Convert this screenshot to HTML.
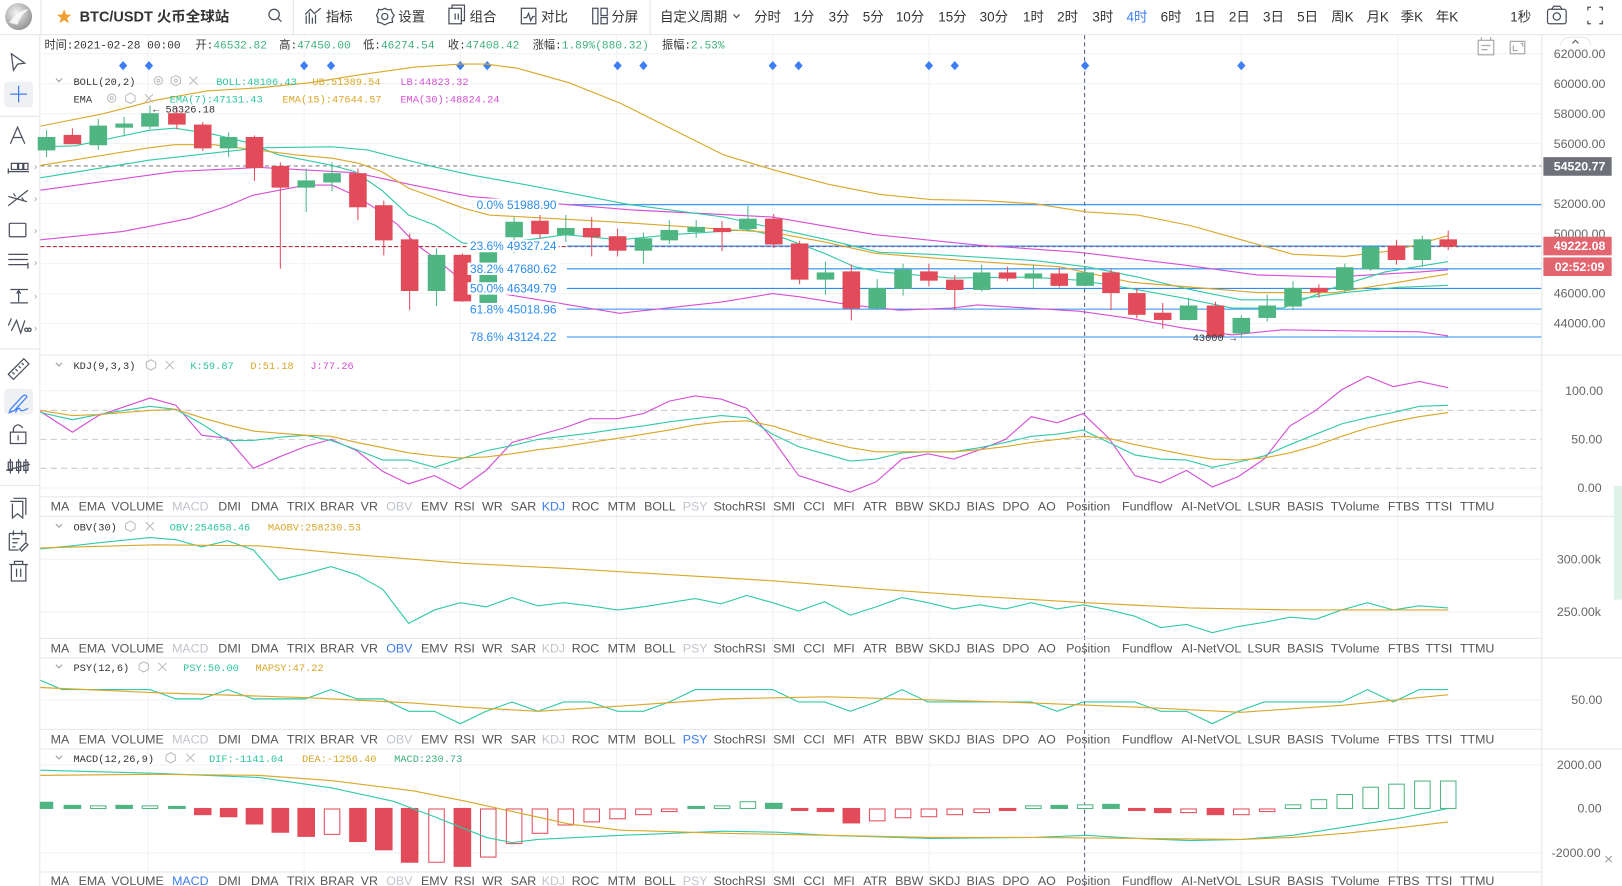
<!DOCTYPE html>
<html><head><meta charset="utf-8">
<style>
html,body{margin:0;padding:0;background:#fff;overflow:hidden;}
svg{display:block;}
text{font-family:"Liberation Sans","Noto Sans CJK SC",sans-serif;}
.m,.m text,text.m{font-family:"Liberation Mono","Noto Sans CJK SC",monospace;font-size:10px;}
.inf text{font-family:"Liberation Mono","Noto Sans CJK SC",monospace;font-size:10.8px;}
.tb{font-size:13px;fill:#333;}
.tab{font-size:12px;fill:#555;text-anchor:middle;}
.ax{font-size:12px;fill:#666;}
.ic{fill:none;stroke:#4a4f5c;stroke-width:1.2;}
</style></head>
<body>
<svg width="1622" height="886" viewBox="0 0 1568 857" preserveAspectRatio="none" xmlns="http://www.w3.org/2000/svg">
<rect width="1568" height="857" fill="#fff"/>
<!-- top bar -->
<line x1="0" y1="33.5" x2="1568" y2="33.5" stroke="#e3e5ea"/>
<line x1="39.5" y1="0" x2="39.5" y2="33" stroke="#e3e5ea"/>
<line x1="283.5" y1="0" x2="283.5" y2="33" stroke="#e3e5ea"/>
<line x1="628.5" y1="0" x2="628.5" y2="33" stroke="#e3e5ea"/>
<defs><radialGradient id="lg" cx="0.4" cy="0.35" r="0.7"><stop offset="0" stop-color="#f2f2f2"/><stop offset="1" stop-color="#8f8f8f"/></radialGradient></defs>
<circle cx="18" cy="16" r="13" fill="url(#lg)"/>
<path d="M9 22 Q16 10 28 9 Q20 14 17 24 Z" fill="#fff" opacity="0.8"/>
<path d="M62 9 L64 14 L69 14.3 L65 17.5 L66.5 22.5 L62 19.6 L57.5 22.5 L59 17.5 L55 14.3 L60 14 Z" fill="#f0a030"/>
<text x="77" y="21" style="font-size:14px;font-weight:bold;fill:#333">BTC/USDT 火币全球站</text>
<circle cx="265" cy="14" r="5" class="ic"/><line x1="269" y1="18" x2="272" y2="21" class="ic"/>
<path d="M296 23 L296 15 M299 23 L299 12 M302 23 L302 17 M305 23 L305 14 M295 14 L300 9 L304 13 L310 8" class="ic"/>
<text x="315" y="21" class="tb">指标</text>
<circle cx="372" cy="16" r="3" class="ic"/><path d="M372 8 L375 9.5 L378 9 L379 12 L381 15 L379 18 L379.5 21.5 L376 22 L372 24 L368 22 L365 21.5 L365.5 18 L364 15 L365.5 12 L366 9 L369 9.5 Z" class="ic"/>
<text x="385" y="21" class="tb">设置</text>
<rect x="434" y="8" width="12" height="15" class="ic"/><path d="M437 8 V5 H449 V20 H446 M440 13 V19 M443 13 V19" class="ic"/>
<text x="454" y="21" class="tb">组合</text>
<rect x="504" y="8" width="14" height="15" class="ic"/><path d="M506 17 L509 17 L511 13 L513 20 L515 16 L517 16" class="ic"/>
<text x="523" y="21" class="tb">对比</text>
<rect x="573" y="8" width="5" height="15" class="ic"/><rect x="581" y="8" width="6" height="7" class="ic"/><rect x="581" y="17" width="6" height="6" class="ic"/>
<text x="591" y="21" class="tb">分屏</text>
<text x="638" y="21" class="tb">自定义周期</text>
<path d="M709 14 L712 17 L715 14" class="ic"/>
<g class="tb"><text x="729" y="21">分时</text><text x="767" y="21">1分</text><text x="801" y="21">3分</text><text x="834" y="21">5分</text><text x="866" y="21">10分</text><text x="907" y="21">15分</text><text x="947" y="21">30分</text><text x="989" y="21">1时</text><text x="1022" y="21">2时</text><text x="1056" y="21">3时</text><text x="1089" y="21" style="fill:#3d7ef5">4时</text><text x="1122" y="21">6时</text><text x="1155" y="21">1日</text><text x="1188" y="21">2日</text><text x="1221" y="21">3日</text><text x="1254" y="21">5日</text><text x="1287" y="21">周K</text><text x="1321" y="21">月K</text><text x="1354" y="21">季K</text><text x="1388" y="21">年K</text><text x="1460" y="21">1秒</text></g>
<rect x="1496" y="9" width="18" height="14" rx="2" class="ic"/><circle cx="1505" cy="16" r="3.5" class="ic"/><path d="M1500 9 L1502 6 H1508 L1510 9" class="ic"/>
<path d="M1535 10 V7 H1538 M1546 7 H1549 V10 M1549 20 V23 H1546 M1538 23 H1535 V20" class="ic"/>

<!-- left toolbar -->
<line x1="38.5" y1="34" x2="38.5" y2="857" stroke="#e3e5ea"/>
<line x1="0" y1="112.5" x2="38" y2="112.5" stroke="#e3e5ea"/>
<line x1="0" y1="337.5" x2="38" y2="337.5" stroke="#e3e5ea"/>
<line x1="0" y1="469.5" x2="38" y2="469.5" stroke="#e3e5ea"/>
<rect x="4" y="79" width="28" height="25" rx="4" fill="#eef0f4"/>
<rect x="4" y="376" width="28" height="25" rx="4" fill="#eef0f4"/>
<path d="M11 52 L24 61 L17 62 L13 68 Z" class="ic"/>
<path d="M18 83 V99 M10 91 H26" style="stroke:#3d7ef5;stroke-width:1.2;fill:none"/>
<path d="M10 139 L17 123 L24 139 M13 133 H21" class="ic"/>
<path d="M8 163 V168 M8 166 H28 M11 158 H17 V164 H11 Z M18 158 H22 V164 H18 Z M23 158 H27 V164 H23 Z" class="ic"/>
<path d="M8 199 L27 184 M8 190 L26 195 M13 187 L15 190 M21 191 L23 194" class="ic"/>
<rect x="9" y="216" width="16" height="13" rx="1" class="ic"/>
<path d="M8 246 H27 M8 251 H27 M8 256 H27 M27 254 V260" class="ic"/>
<path d="M10 280 H27 M10 293 H27 M18 281 V292 M16 284 L18 281 L20 284" class="ic"/>
<path d="M8 315 L11 308 M11 320 L16 310 L20 322 L24 310" class="ic"/><circle cx="25.5" cy="319" r="1.6" class="ic"/><circle cx="28.5" cy="319" r="1.6" class="ic"/>
<g style="font-size:9px;fill:#999"><text x="33" y="164">›</text><text x="33" y="195">›</text><text x="33" y="226">›</text><text x="33" y="257">›</text><text x="33" y="289">›</text><text x="33" y="320">›</text></g>
<path d="M8 362 L23 347 L28 352 L13 367 Z M12 360 L14 362 M15 357 L17 359 M18 354 L20 356 M21 351 L23 353" class="ic"/>
<path d="M10 396 L22 383 Q25 381 26 384 L14 397 L9 399 Z M15 399 Q18 392 20 397 Q22 398 27 395" style="stroke:#3d7ef5;stroke-width:1.2;fill:none"/>
<rect x="10" y="418" width="15" height="11" class="ic"/><path d="M13 418 V414 Q17.5 408 22 414" class="ic"/><line x1="17.5" y1="421" x2="17.5" y2="426" class="ic"/>
<path d="M6 455 L29 449 M10 444 V458 M18 444 V458 M25 444 V458" class="ic"/><rect x="8" y="447" width="4" height="8" class="ic"/><rect x="16" y="447" width="4" height="8" class="ic"/><rect x="23" y="447" width="4" height="8" class="ic"/>
<path d="M10 485 H22 V501 L17 497 L12 501 V487 M13 482 H25 V498" class="ic"/>
<path d="M9 516 H25 V524 M9 516 V532 H18 M12 521 H19 M12 525 H17 M12 529 H15 M19 531 L25 525 L27 527 L21 533 Z M13 513 V518 M21 513 V518" class="ic"/>
<path d="M9 546 H27 M14 546 V543 H22 V546 M11 546 V562 H25 V546 M16 550 V558 M20 550 V558" class="ic"/>

<!-- grid -->
<g stroke="#f0f2f5" stroke-width="1">
<line x1="143" y1="34" x2="143" y2="857"/><line x1="294" y1="34" x2="294" y2="857"/><line x1="445" y1="34" x2="445" y2="857"/><line x1="596" y1="34" x2="596" y2="857"/><line x1="747" y1="34" x2="747" y2="857"/><line x1="898" y1="34" x2="898" y2="857"/><line x1="1200" y1="34" x2="1200" y2="857"/><line x1="1351" y1="34" x2="1351" y2="857"/>
<line x1="39" y1="52" x2="1490" y2="52"/><line x1="39" y1="81" x2="1490" y2="81"/><line x1="39" y1="110" x2="1490" y2="110"/><line x1="39" y1="139" x2="1490" y2="139"/><line x1="39" y1="168" x2="1490" y2="168"/><line x1="39" y1="197" x2="1490" y2="197"/><line x1="39" y1="226" x2="1490" y2="226"/><line x1="39" y1="255" x2="1490" y2="255"/><line x1="39" y1="284" x2="1490" y2="284"/><line x1="39" y1="313" x2="1490" y2="313"/>
<line x1="39" y1="378" x2="1490" y2="378"/><line x1="39" y1="472" x2="1490" y2="472"/>
<line x1="39" y1="541" x2="1490" y2="541"/><line x1="39" y1="592" x2="1490" y2="592"/>
<line x1="39" y1="677" x2="1490" y2="677"/>
<line x1="39" y1="740" x2="1490" y2="740"/><line x1="39" y1="825" x2="1490" y2="825"/>
</g>
<line x1="1048.5" y1="34" x2="1048.5" y2="857" stroke="#55607a" stroke-dasharray="4,3"/>
<g stroke="#e3e5ea">
<line x1="39" y1="343.5" x2="1568" y2="343.5"/><line x1="39" y1="480.5" x2="1490" y2="480.5"/><line x1="39" y1="499.5" x2="1568" y2="499.5"/>
<line x1="39" y1="617.5" x2="1490" y2="617.5"/><line x1="39" y1="636.5" x2="1568" y2="636.5"/>
<line x1="39" y1="705.5" x2="1490" y2="705.5"/><line x1="39" y1="724.5" x2="1568" y2="724.5"/>
<line x1="39" y1="843.5" x2="1490" y2="843.5"/>
<line x1="1490.5" y1="34" x2="1490.5" y2="857"/>
</g>
<rect x="1560" y="470" width="8" height="110" fill="#dff3e8"/>

<!-- info row -->
<g class="inf">
<text x="43" y="47" fill="#333">时间:2021-02-28 00:00</text>
<text x="189" y="47" fill="#333">开:<tspan fill="#3fb07d">46532.82</tspan></text>
<text x="270" y="47" fill="#333">高:<tspan fill="#3fb07d">47450.00</tspan></text>
<text x="351" y="47" fill="#333">低:<tspan fill="#3fb07d">46274.54</tspan></text>
<text x="433" y="47" fill="#333">收:<tspan fill="#3fb07d">47408.42</tspan></text>
<text x="515" y="47" fill="#333">涨幅:<tspan fill="#3fb07d">1.89%(880.32)</tspan></text>
<text x="640" y="47" fill="#333">振幅:<tspan fill="#3fb07d">2.53%</tspan></text>
</g>
<rect x="1429" y="39" width="15" height="14" class="ic" style="stroke:#aaa"/><path d="M1432 39 V36 M1441 39 V36 M1432 44 H1441 M1432 48 H1438" class="ic" style="stroke:#aaa"/>
<path d="M1460 40 H1474 V52 H1460 Z M1463 44 V49 H1467 M1470 42 H1472 V45" class="ic" style="stroke:#aaa"/>
<path d="M1508 44 Q1510 36 1520 36 H1528 Q1537 36 1538 44" fill="#fff" stroke="#e3e5ea"/><path d="M1520 42 L1523 39 L1526 42" class="ic" style="stroke:#666"/>

<!-- diamonds -->
<g fill="#3d7ef5">
<path d="M119 59 l4 4.5 -4 4.5 -4 -4.5z"/><path d="M144 59 l4 4.5 -4 4.5 -4 -4.5z"/><path d="M294 59 l4 4.5 -4 4.5 -4 -4.5z"/><path d="M320 59 l4 4.5 -4 4.5 -4 -4.5z"/><path d="M445 59 l4 4.5 -4 4.5 -4 -4.5z"/><path d="M471 59 l4 4.5 -4 4.5 -4 -4.5z"/><path d="M597 59 l4 4.5 -4 4.5 -4 -4.5z"/><path d="M622 59 l4 4.5 -4 4.5 -4 -4.5z"/><path d="M747 59 l4 4.5 -4 4.5 -4 -4.5z"/><path d="M772 59 l4 4.5 -4 4.5 -4 -4.5z"/><path d="M898 59 l4 4.5 -4 4.5 -4 -4.5z"/><path d="M923 59 l4 4.5 -4 4.5 -4 -4.5z"/><path d="M1049 59 l4 4.5 -4 4.5 -4 -4.5z"/><path d="M1200 59 l4 4.5 -4 4.5 -4 -4.5z"/>
</g>

<line x1="39" y1="160.5" x2="1490" y2="160.5" stroke="#888" stroke-dasharray="4,3"/>
<line x1="39" y1="238.5" x2="1490" y2="238.5" stroke="#b0303c" stroke-dasharray="4,2"/>
<g stroke="#2a8cf0" stroke-width="1">
<line x1="548" y1="198" x2="1490" y2="198"/><line x1="548" y1="238" x2="1490" y2="238"/><line x1="548" y1="260" x2="1490" y2="260"/><line x1="548" y1="279" x2="1490" y2="279"/><line x1="548" y1="299" x2="1490" y2="299"/><line x1="548" y1="326" x2="1490" y2="326"/>
</g>

<g fill="none" stroke-width="1.1">
<polyline stroke="#d9a72b" points="39,122 100,110 150,97 200,88 250,85 300,80 350,72 400,65 445,62 470,62 500,66 550,80 600,100 650,125 700,150 750,165 800,178 850,188 900,193 950,194 1000,197 1050,205 1100,208 1150,218 1200,232 1250,246 1300,248 1350,242 1400,228"/>
<polyline stroke="#d64fd6" points="39,232 118,224 144,219 184,211 218,200 244,189 296,179 321,179 343,189 362,201 384,217 403,237 421,250 451,275 491,285 599,303 698,292 747,284 772,287 822,295 870,300 920,298 945,295 1043,301 1093,308 1142,317 1191,324 1240,319 1373,321 1400,325"/>
<polyline stroke="#d64fd6" points="39,184 169,166 251,162 343,167 399,179 454,190 609,203 747,210 846,227 945,237 1043,244 1142,256 1216,266 1290,268 1373,263 1400,261"/>
<polyline stroke="#34c9a6" points="39,142 73,141 144,126 169,124 207,130 236,137 270,150 296,155 321,160 343,166 369,184 395,208 421,218 447,235 473,237 547,227 599,232 649,227 723,222 757,230 797,245 826,258 851,263 920,269 994,268 1043,271 1093,279 1142,288 1191,298 1240,298 1290,278 1339,263 1400,253"/>
<polyline stroke="#34c9a6" points="39,172 144,155 251,143 321,142 355,145 418,161 454,169 510,179 609,198 700,210 800,232 850,244 900,246 1000,252 1050,258 1100,268 1150,280 1200,290 1250,290 1300,283 1350,278 1400,276"/>
<polyline stroke="#d9a72b" points="39,160 144,143 169,140 207,140 288,150 321,153 347,158 369,166 395,182 447,201 473,208 599,215 747,225 797,234 846,245 945,253 1024,258 1093,273 1142,277 1216,283 1290,283 1340,275 1400,265"/>
</g>

<!-- candles -->
<g stroke="#4fb583" fill="#4fb583">
<line x1="45" y1="126" x2="45" y2="152"/><rect x="37" y="133" width="16" height="12"/>
<line x1="95" y1="115" x2="95" y2="145"/><rect x="87" y="122" width="16" height="18"/>
<line x1="120" y1="113" x2="120" y2="132"/><rect x="112" y="120" width="16" height="3"/>
<line x1="145" y1="102" x2="145" y2="125"/><rect x="137" y="110" width="16" height="12"/>
<line x1="221" y1="128" x2="221" y2="152"/><rect x="213" y="133" width="16" height="10"/>
<line x1="296" y1="163" x2="296" y2="205"/><rect x="288" y="175" width="16" height="6"/>
<line x1="321" y1="157" x2="321" y2="185"/><rect x="313" y="168" width="16" height="8"/>
<line x1="422" y1="240" x2="422" y2="296"/><rect x="414" y="247" width="16" height="34"/>
<line x1="472" y1="237" x2="472" y2="302"/><rect x="464" y="244" width="16" height="56"/>
<line x1="497" y1="210" x2="497" y2="245"/><rect x="489" y="215" width="16" height="14"/>
<line x1="547" y1="208" x2="547" y2="234"/><rect x="539" y="221" width="16" height="6"/>
<line x1="622" y1="225" x2="622" y2="255"/><rect x="614" y="231" width="16" height="11"/>
<line x1="647" y1="213" x2="647" y2="236"/><rect x="639" y="223" width="16" height="9"/>
<line x1="673" y1="213" x2="673" y2="230"/><rect x="665" y="220" width="16" height="4"/>
<line x1="723" y1="199" x2="723" y2="224"/><rect x="715" y="212" width="16" height="9"/>
<line x1="798" y1="253" x2="798" y2="285"/><rect x="790" y="264" width="16" height="6"/>
<line x1="848" y1="270" x2="848" y2="300"/><rect x="840" y="279" width="16" height="19"/>
<line x1="873" y1="255" x2="873" y2="286"/><rect x="865" y="261" width="16" height="18"/>
<line x1="949" y1="256" x2="949" y2="282"/><rect x="941" y="264" width="16" height="16"/>
<line x1="999" y1="256" x2="999" y2="280"/><rect x="991" y="265" width="16" height="4"/>
<line x1="1049" y1="258" x2="1049" y2="277"/><rect x="1041" y="264" width="16" height="12"/>
<line x1="1149" y1="288" x2="1149" y2="310"/><rect x="1141" y="296" width="16" height="13"/>
<line x1="1200" y1="305" x2="1200" y2="327"/><rect x="1192" y="308" width="16" height="14"/>
<line x1="1225" y1="285" x2="1225" y2="311"/><rect x="1217" y="296" width="16" height="11"/>
<line x1="1250" y1="272" x2="1250" y2="300"/><rect x="1242" y="279" width="16" height="17"/>
<line x1="1300" y1="255" x2="1300" y2="283"/><rect x="1292" y="259" width="16" height="21"/>
<line x1="1325" y1="237" x2="1325" y2="262"/><rect x="1317" y="239" width="16" height="21"/>
<line x1="1375" y1="228" x2="1375" y2="258"/><rect x="1367" y="232" width="16" height="19"/>
</g>
<g stroke="#e24b59" fill="#e24b59">
<line x1="70" y1="124" x2="70" y2="139"/><rect x="62" y="131" width="16" height="8"/>
<line x1="171" y1="104" x2="171" y2="125"/><rect x="163" y="110" width="16" height="10"/>
<line x1="196" y1="118" x2="196" y2="146"/><rect x="188" y="121" width="16" height="22"/>
<line x1="246" y1="131" x2="246" y2="175"/><rect x="238" y="133" width="16" height="29"/>
<line x1="271" y1="157" x2="271" y2="260"/><rect x="263" y="161" width="16" height="20"/>
<line x1="346" y1="163" x2="346" y2="213"/><rect x="338" y="168" width="16" height="32"/>
<line x1="371" y1="194" x2="371" y2="247"/><rect x="363" y="199" width="16" height="33"/>
<line x1="396" y1="226" x2="396" y2="300"/><rect x="388" y="232" width="16" height="49"/>
<line x1="447" y1="245" x2="447" y2="292"/><rect x="439" y="247" width="16" height="44"/>
<line x1="522" y1="208" x2="522" y2="231"/><rect x="514" y="214" width="16" height="12"/>
<line x1="572" y1="210" x2="572" y2="248"/><rect x="564" y="221" width="16" height="8"/>
<line x1="597" y1="221" x2="597" y2="248"/><rect x="589" y="229" width="16" height="13"/>
<line x1="698" y1="214" x2="698" y2="243"/><rect x="690" y="221" width="16" height="3"/>
<line x1="748" y1="207" x2="748" y2="240"/><rect x="740" y="212" width="16" height="24"/>
<line x1="773" y1="233" x2="773" y2="275"/><rect x="765" y="236" width="16" height="34"/>
<line x1="823" y1="256" x2="823" y2="310"/><rect x="815" y="263" width="16" height="35"/>
<line x1="898" y1="255" x2="898" y2="277"/><rect x="890" y="263" width="16" height="8"/>
<line x1="923" y1="266" x2="923" y2="300"/><rect x="915" y="271" width="16" height="9"/>
<line x1="974" y1="258" x2="974" y2="272"/><rect x="966" y="264" width="16" height="5"/>
<line x1="1024" y1="259" x2="1024" y2="278"/><rect x="1016" y="265" width="16" height="11"/>
<line x1="1074" y1="260" x2="1074" y2="300"/><rect x="1066" y="264" width="16" height="19"/>
<line x1="1099" y1="279" x2="1099" y2="308"/><rect x="1091" y="284" width="16" height="20"/>
<line x1="1124" y1="293" x2="1124" y2="318"/><rect x="1116" y="303" width="16" height="6"/>
<line x1="1175" y1="292" x2="1175" y2="326"/><rect x="1167" y="296" width="16" height="29"/>
<line x1="1275" y1="275" x2="1275" y2="288"/><rect x="1267" y="279" width="16" height="3"/>
<line x1="1350" y1="232" x2="1350" y2="256"/><rect x="1342" y="238" width="16" height="13"/>
<line x1="1400" y1="223" x2="1400" y2="242"/><rect x="1392" y="232" width="16" height="6"/>
</g>

<g fill="#fff"><rect x="458" y="192" width="82" height="12"/><rect x="452" y="232" width="88" height="12"/><rect x="452" y="254" width="88" height="12"/><rect x="452" y="273" width="88" height="12"/><rect x="452" y="293" width="88" height="12"/><rect x="452" y="320" width="88" height="12"/></g>
<g style="font-size:11.5px;fill:#2a8cf0" text-anchor="end">
<text x="538" y="202">0.0% 51988.90</text><text x="538" y="242">23.6% 49327.24</text><text x="538" y="264">38.2% 47680.62</text><text x="538" y="283">50.0% 46349.79</text><text x="538" y="303">61.8% 45018.96</text><text x="538" y="330">78.6% 43124.22</text>
</g>
<text x="148" y="109" class="m" fill="#333">← 58326.18</text>
<text x="1153" y="330" class="m" fill="#333">43000 →</text>

<!-- legends main -->
<g class="m">
<path d="M54 76 L57 79 L60 76" fill="none" stroke="#999"/>
<text x="71" y="82" fill="#333">BOLL(20,2)</text>
<circle cx="153" cy="78" r="4" fill="none" stroke="#bbb"/><circle cx="153" cy="78" r="1.5" fill="none" stroke="#bbb"/>
<path d="M170 73 L174.5 75.5 V80.5 L170 83 L165.5 80.5 V75.5 Z" fill="none" stroke="#bbb"/><circle cx="170" cy="78" r="1.5" fill="none" stroke="#bbb"/>
<path d="M183 74 L191 82 M191 74 L183 82" stroke="#bbb"/>
<text x="209" y="82" fill="#2ec4a0">BOLL:48106.43</text><text x="302" y="82" fill="#d9a72b">UB:51389.54</text><text x="387" y="82" fill="#d64fd6">LB:44823.32</text>
<text x="71" y="99" fill="#333">EMA</text>
<circle cx="108" cy="95" r="4" fill="none" stroke="#bbb"/><circle cx="108" cy="95" r="1.5" fill="none" stroke="#bbb"/>
<path d="M126 90 L130.5 92.5 V97.5 L126 100 L121.5 97.5 V92.5 Z" fill="none" stroke="#bbb"/>
<path d="M140 91 L148 99 M148 91 L140 99" stroke="#bbb"/>
<text x="164" y="99" fill="#2ec4a0">EMA(7):47131.43</text><text x="273" y="99" fill="#d9a72b">EMA(15):47644.57</text><text x="387" y="99" fill="#d64fd6">EMA(30):48824.24</text>
</g>

<g class="ax">
<text x="1502" y="56">62000.00</text><text x="1502" y="85">60000.00</text><text x="1502" y="114">58000.00</text><text x="1502" y="143">56000.00</text><text x="1502" y="201">52000.00</text><text x="1502" y="230">50000.00</text><text x="1502" y="288">46000.00</text><text x="1502" y="317">44000.00</text>
<text x="1513" y="382">100.00</text><text x="1519" y="429">50.00</text><text x="1525" y="476">0.00</text>
<text x="1505" y="545">300.00k</text><text x="1505" y="596">250.00k</text>
<text x="1519" y="681">50.00</text>
<text x="1505" y="744">2000.00</text><text x="1525" y="786">0.00</text><text x="1500" y="829">-2000.00</text>
</g>
<rect x="1492" y="152" width="66" height="18" fill="#6d7079"/><text x="1502" y="165" style="font-size:12px;font-weight:bold;fill:#fff">54520.77</text>
<rect x="1492" y="229" width="66" height="18" fill="#e26570"/><text x="1502" y="242" style="font-size:12px;font-weight:bold;fill:#fff">49222.08</text>
<rect x="1492" y="249" width="66" height="18" fill="#e26570"/><text x="1503" y="262" style="font-size:12px;font-weight:bold;fill:#fff">02:52:09</text>

<!-- KDJ panel -->
<g stroke="#ccc" stroke-dasharray="6,4"><line x1="39" y1="397" x2="1490" y2="397"/><line x1="39" y1="425" x2="1490" y2="425"/><line x1="39" y1="453" x2="1490" y2="453"/></g>
<g class="m">
<path d="M54 351 L57 354 L60 351" fill="none" stroke="#999"/>
<text x="71" y="357" fill="#333">KDJ(9,3,3)</text>
<path d="M146 348 L150.5 350.5 V355.5 L146 358 L141.5 355.5 V350.5 Z" fill="none" stroke="#bbb"/>
<path d="M160 349 L168 357 M168 349 L160 357" stroke="#bbb"/>
<text x="184" y="357" fill="#2ec4a0">K:59.87</text><text x="242" y="357" fill="#d9a72b">D:51.18</text><text x="300" y="357" fill="#d64fd6">J:77.26</text>
</g>
<g fill="none" stroke-width="1.1">
<polyline stroke="#d64fd6" points="39,398 70,418 95,402 145,385 170,392 195,421 220,424 245,453 270,442 295,432 320,425 345,436 370,456 395,468 420,460 445,473 470,455 495,428 520,421 545,414 570,405 597,405 622,400 647,388 672,383 697,386 722,395 747,425 772,460 797,468 822,476 847,466 872,444 897,439 922,444 947,435 972,425 997,403 1022,409 1047,400 1072,424 1097,460 1122,467 1147,455 1172,471 1197,461 1222,444 1247,412 1272,397 1297,377 1322,364 1347,374 1372,369 1400,375"/>
<polyline stroke="#34c9a6" points="39,399 70,406 95,401 145,393 170,396 195,410 220,426 245,426 270,423 295,421 320,426 345,435 370,445 395,445 420,452 445,444 470,436 495,431 520,425 545,422 570,419 597,415 622,412 647,408 672,405 697,402 722,404 747,420 772,432 797,439 822,446 847,444 872,438 897,437 922,437 947,433 972,428 997,422 1022,420 1047,416 1072,428 1097,440 1122,444 1147,445 1172,452 1197,447 1222,441 1247,430 1272,420 1297,410 1322,404 1347,399 1372,393 1400,392"/>
<polyline stroke="#d9a72b" points="39,397 70,402 95,401 145,397 170,396 195,404 220,411 245,417 270,419 295,421 320,422 345,428 370,433 395,438 420,441 445,443 470,442 495,439 520,435 545,432 570,428 597,424 622,420 647,416 672,411 697,408 722,407 747,412 772,420 797,427 822,433 847,437 872,437 897,437 922,437 947,435 972,432 997,428 1022,425 1047,422 1072,424 1097,430 1122,435 1147,440 1172,444 1197,445 1222,443 1247,438 1272,431 1297,422 1322,414 1347,408 1372,403 1400,399"/>
</g>

<!-- OBV panel -->
<g class="m">
<path d="M54 507 L57 510 L60 507" fill="none" stroke="#999"/>
<text x="71" y="513" fill="#333">OBV(30)</text>
<path d="M126 504 L130.5 506.5 V511.5 L126 514 L121.5 511.5 V506.5 Z" fill="none" stroke="#bbb"/>
<path d="M141 505 L149 513 M149 505 L141 513" stroke="#bbb"/>
<text x="164" y="513" fill="#2ec4a0">OBV:254658.46</text><text x="259" y="513" fill="#d9a72b">MAOBV:258230.53</text>
</g>
<g fill="none" stroke-width="1.1">
<polyline stroke="#34c9a6" points="39,531 70,528 95,525 145,520 170,522 195,529 220,523 245,532 270,561 295,555 320,548 345,556 370,570 395,603 420,590 445,583 470,587 495,578 520,586 545,583 570,586 597,590 622,587 647,583 672,579 697,584 722,576 747,583 772,591 797,582 822,595 847,587 872,578 897,583 922,589 947,585 972,589 997,583 1022,589 1047,585 1072,590 1097,596 1122,607 1147,604 1172,612 1197,606 1222,602 1247,597 1272,599 1297,590 1322,583 1347,590 1372,586 1400,588"/>
<polyline stroke="#d9a72b" points="39,530 150,527 250,528 350,537 450,545 550,550 650,556 750,562 850,570 950,577 1050,583 1150,588 1250,590 1400,590"/>
</g>

<!-- PSY panel -->
<g class="m">
<path d="M54 643 L57 646 L60 643" fill="none" stroke="#999"/>
<text x="71" y="649" fill="#333">PSY(12,6)</text>
<path d="M139 640 L143.5 642.5 V647.5 L139 650 L134.5 647.5 V642.5 Z" fill="none" stroke="#bbb"/>
<path d="M153 641 L161 649 M161 641 L153 649" stroke="#bbb"/>
<text x="177" y="649" fill="#2ec4a0">PSY:50.00</text><text x="247" y="649" fill="#d9a72b">MAPSY:47.22</text>
</g>
<g fill="none" stroke-width="1.1">
<polyline stroke="#34c9a6" points="39,658 60,667 95,667 145,667 170,676 195,676 220,667 245,676 270,676 295,676 320,667 345,676 370,676 395,688 420,688 445,700 470,688 495,679 520,688 545,679 570,679 597,688 622,688 647,679 672,667 697,667 722,667 747,667 772,679 797,679 822,688 847,679 872,667 897,679 922,679 947,679 972,679 997,679 1022,688 1047,679 1072,679 1097,679 1122,688 1147,688 1172,700 1197,688 1222,679 1247,679 1272,679 1297,679 1322,667 1347,679 1372,667 1400,667"/>
<polyline stroke="#d9a72b" points="39,665 150,670 300,675 400,680 450,684 520,688 600,683 700,676 800,674 900,677 1000,680 1100,684 1200,689 1300,682 1400,672"/>
</g>

<!-- MACD panel -->
<g class="m">
<path d="M54 731 L57 734 L60 731" fill="none" stroke="#999"/>
<text x="71" y="737" fill="#333">MACD(12,26,9)</text>
<path d="M165 728 L169.5 730.5 V735.5 L165 738 L160.5 735.5 V730.5 Z" fill="none" stroke="#bbb"/>
<path d="M180 729 L188 737 M188 729 L180 737" stroke="#bbb"/>
<text x="202" y="737" fill="#2ec4a0">DIF:-1141.04</text><text x="292" y="737" fill="#d9a72b">DEA:-1256.40</text><text x="381" y="737" fill="#3fb07d">MACD:230.73</text>
</g>
<g fill="#4fb583" stroke="#4fb583">
<rect x="39" y="776" width="12" height="6"/><rect x="62" y="779" width="16" height="3"/><rect x="112" y="779" width="16" height="3"/><rect x="163" y="780" width="16" height="2"/><rect x="665" y="780" width="16" height="2"/><rect x="740" y="777" width="16" height="5"/><rect x="1016" y="779" width="16" height="3"/><rect x="1066" y="778" width="16" height="4"/>
</g>
<g fill="#fff" stroke="#4fb583">
<rect x="87.5" y="779.5" width="15" height="2.5"/><rect x="137.5" y="779.5" width="15" height="2.5"/><rect x="690.5" y="779.5" width="15" height="2.5"/><rect x="715.5" y="775.5" width="15" height="6.5"/><rect x="991.5" y="779.5" width="15" height="2.5"/><rect x="1041.5" y="778.5" width="15" height="3.5"/>
<rect x="1242.5" y="778.5" width="15" height="3.5"/><rect x="1267.5" y="773.5" width="15" height="8.5"/><rect x="1292.5" y="768.5" width="15" height="13.5"/><rect x="1317.5" y="761.5" width="15" height="20.5"/><rect x="1342.5" y="758.5" width="15" height="23.5"/><rect x="1367.5" y="755.5" width="15" height="26.5"/><rect x="1392.5" y="755.5" width="15" height="26.5"/>
</g>
<g fill="#e24b59" stroke="#e24b59">
<rect x="188" y="782" width="16" height="6"/><rect x="213" y="782" width="16" height="8"/><rect x="238" y="782" width="16" height="15"/><rect x="263" y="782" width="16" height="23"/><rect x="288" y="782" width="16" height="27"/><rect x="338" y="782" width="16" height="32"/><rect x="363" y="782" width="16" height="40"/><rect x="388" y="782" width="16" height="52"/><rect x="439" y="782" width="16" height="56"/>
<rect x="765" y="782" width="16" height="2"/><rect x="815" y="782" width="16" height="14"/><rect x="966" y="782" width="16" height="2"/><rect x="1091" y="782" width="16" height="2"/><rect x="1116" y="782" width="16" height="4"/><rect x="1167" y="782" width="16" height="6"/><rect x="790" y="782" width="16" height="3"/>
</g>
<g fill="#fff" stroke="#e24b59">
<rect x="313.5" y="782.5" width="15" height="24.5"/><rect x="414.5" y="782.5" width="15" height="51.5"/><rect x="464.5" y="782.5" width="15" height="46.5"/><rect x="489.5" y="782.5" width="15" height="33.5"/><rect x="514.5" y="782.5" width="15" height="23.5"/><rect x="539.5" y="782.5" width="15" height="15.5"/><rect x="564.5" y="782.5" width="15" height="12.5"/><rect x="589.5" y="782.5" width="15" height="9.5"/><rect x="614.5" y="782.5" width="15" height="5.5"/><rect x="639.5" y="782.5" width="15" height="2.5"/>
<rect x="840.5" y="782.5" width="15" height="11.5"/><rect x="865.5" y="782.5" width="15" height="8.5"/><rect x="890.5" y="782.5" width="15" height="7.5"/><rect x="915.5" y="782.5" width="15" height="5.5"/><rect x="941.5" y="782.5" width="15" height="3.5"/><rect x="1141.5" y="782.5" width="15" height="3.5"/><rect x="1192.5" y="782.5" width="15" height="5.5"/><rect x="1217.5" y="782.5" width="15" height="2.5"/>
</g>
<g fill="none" stroke-width="1.1">
<polyline stroke="#34c9a6" points="39,745 150,748 250,752 320,762 380,775 420,790 445,800 470,810 495,815 520,812 600,808 700,804 750,805 800,808 900,811 1000,810 1050,808 1100,811 1150,813 1200,812 1250,808 1300,800 1350,792 1400,782"/>
<polyline stroke="#d9a72b" points="39,750 150,749 250,750 320,755 400,765 450,775 500,786 550,797 600,803 700,806 800,808 900,810 1000,810 1100,811 1200,812 1250,810 1300,806 1350,801 1400,795"/>
</g>

<!-- tab rows -->
<g class="tab">
<text x="58" y="494">MA</text><text x="89" y="494">EMA</text><text x="133" y="494">VOLUME</text><text x="184" y="494" fill="#c0c4cc">MACD</text><text x="222" y="494">DMI</text><text x="256" y="494">DMA</text><text x="291" y="494">TRIX</text><text x="326" y="494">BRAR</text><text x="357" y="494">VR</text><text x="386" y="494" fill="#c0c4cc">OBV</text><text x="420" y="494">EMV</text><text x="449" y="494">RSI</text><text x="476" y="494">WR</text><text x="506" y="494">SAR</text><text x="535" y="494" fill="#3d7ef5">KDJ</text><text x="566" y="494">ROC</text><text x="601" y="494">MTM</text><text x="638" y="494">BOLL</text><text x="672" y="494" fill="#c0c4cc">PSY</text><text x="715" y="494">StochRSI</text><text x="758" y="494">SMI</text><text x="787" y="494">CCI</text><text x="816" y="494">MFI</text><text x="846" y="494">ATR</text><text x="879" y="494">BBW</text><text x="913" y="494">SKDJ</text><text x="948" y="494">BIAS</text><text x="982" y="494">DPO</text><text x="1012" y="494">AO</text><text x="1052" y="494">Position</text><text x="1109" y="494">Fundflow</text><text x="1171" y="494">AI-NetVOL</text><text x="1222" y="494">LSUR</text><text x="1262" y="494">BASIS</text><text x="1310" y="494">TVolume</text><text x="1357" y="494">FTBS</text><text x="1391" y="494">TTSI</text><text x="1428" y="494">TTMU</text>
</g>
<g class="tab">
<text x="58" y="631">MA</text><text x="89" y="631">EMA</text><text x="133" y="631">VOLUME</text><text x="184" y="631" fill="#c0c4cc">MACD</text><text x="222" y="631">DMI</text><text x="256" y="631">DMA</text><text x="291" y="631">TRIX</text><text x="326" y="631">BRAR</text><text x="357" y="631">VR</text><text x="386" y="631" fill="#3d7ef5">OBV</text><text x="420" y="631">EMV</text><text x="449" y="631">RSI</text><text x="476" y="631">WR</text><text x="506" y="631">SAR</text><text x="535" y="631" fill="#c0c4cc">KDJ</text><text x="566" y="631">ROC</text><text x="601" y="631">MTM</text><text x="638" y="631">BOLL</text><text x="672" y="631" fill="#c0c4cc">PSY</text><text x="715" y="631">StochRSI</text><text x="758" y="631">SMI</text><text x="787" y="631">CCI</text><text x="816" y="631">MFI</text><text x="846" y="631">ATR</text><text x="879" y="631">BBW</text><text x="913" y="631">SKDJ</text><text x="948" y="631">BIAS</text><text x="982" y="631">DPO</text><text x="1012" y="631">AO</text><text x="1052" y="631">Position</text><text x="1109" y="631">Fundflow</text><text x="1171" y="631">AI-NetVOL</text><text x="1222" y="631">LSUR</text><text x="1262" y="631">BASIS</text><text x="1310" y="631">TVolume</text><text x="1357" y="631">FTBS</text><text x="1391" y="631">TTSI</text><text x="1428" y="631">TTMU</text>
</g>
<g class="tab">
<text x="58" y="719">MA</text><text x="89" y="719">EMA</text><text x="133" y="719">VOLUME</text><text x="184" y="719" fill="#c0c4cc">MACD</text><text x="222" y="719">DMI</text><text x="256" y="719">DMA</text><text x="291" y="719">TRIX</text><text x="326" y="719">BRAR</text><text x="357" y="719">VR</text><text x="386" y="719" fill="#c0c4cc">OBV</text><text x="420" y="719">EMV</text><text x="449" y="719">RSI</text><text x="476" y="719">WR</text><text x="506" y="719">SAR</text><text x="535" y="719" fill="#c0c4cc">KDJ</text><text x="566" y="719">ROC</text><text x="601" y="719">MTM</text><text x="638" y="719">BOLL</text><text x="672" y="719" fill="#3d7ef5">PSY</text><text x="715" y="719">StochRSI</text><text x="758" y="719">SMI</text><text x="787" y="719">CCI</text><text x="816" y="719">MFI</text><text x="846" y="719">ATR</text><text x="879" y="719">BBW</text><text x="913" y="719">SKDJ</text><text x="948" y="719">BIAS</text><text x="982" y="719">DPO</text><text x="1012" y="719">AO</text><text x="1052" y="719">Position</text><text x="1109" y="719">Fundflow</text><text x="1171" y="719">AI-NetVOL</text><text x="1222" y="719">LSUR</text><text x="1262" y="719">BASIS</text><text x="1310" y="719">TVolume</text><text x="1357" y="719">FTBS</text><text x="1391" y="719">TTSI</text><text x="1428" y="719">TTMU</text>
</g>
<g class="tab">
<text x="58" y="856">MA</text><text x="89" y="856">EMA</text><text x="133" y="856">VOLUME</text><text x="184" y="856" fill="#3d7ef5">MACD</text><text x="222" y="856">DMI</text><text x="256" y="856">DMA</text><text x="291" y="856">TRIX</text><text x="326" y="856">BRAR</text><text x="357" y="856">VR</text><text x="386" y="856" fill="#c0c4cc">OBV</text><text x="420" y="856">EMV</text><text x="449" y="856">RSI</text><text x="476" y="856">WR</text><text x="506" y="856">SAR</text><text x="535" y="856" fill="#c0c4cc">KDJ</text><text x="566" y="856">ROC</text><text x="601" y="856">MTM</text><text x="638" y="856">BOLL</text><text x="672" y="856" fill="#c0c4cc">PSY</text><text x="715" y="856">StochRSI</text><text x="758" y="856">SMI</text><text x="787" y="856">CCI</text><text x="816" y="856">MFI</text><text x="846" y="856">ATR</text><text x="879" y="856">BBW</text><text x="913" y="856">SKDJ</text><text x="948" y="856">BIAS</text><text x="982" y="856">DPO</text><text x="1012" y="856">AO</text><text x="1052" y="856">Position</text><text x="1109" y="856">Fundflow</text><text x="1171" y="856">AI-NetVOL</text><text x="1222" y="856">LSUR</text><text x="1262" y="856">BASIS</text><text x="1310" y="856">TVolume</text><text x="1357" y="856">FTBS</text><text x="1391" y="856">TTSI</text><text x="1428" y="856">TTMU</text>
</g>
<path d="M1552 828 L1558 834 M1558 828 L1552 834" stroke="#999"/>
</svg>
</body></html>
